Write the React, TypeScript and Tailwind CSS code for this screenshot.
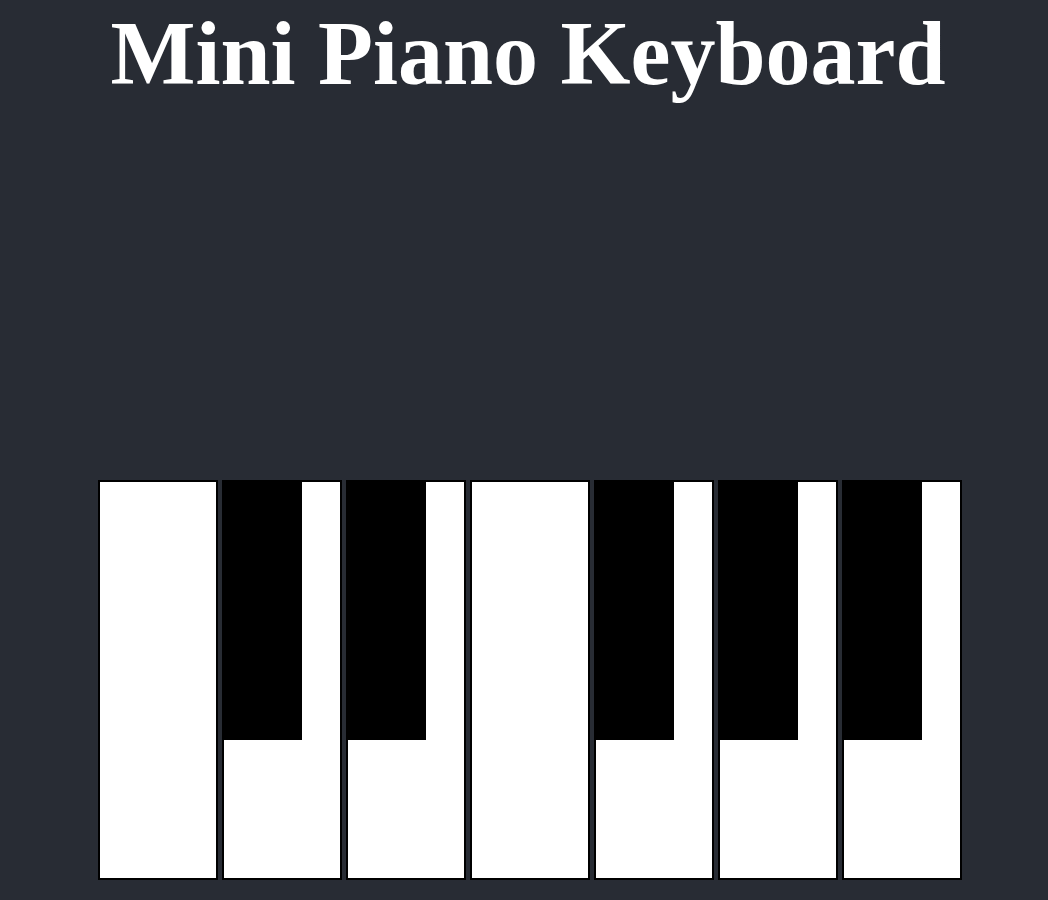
import React from "react";

const keys = [
  { note: "C", sharp: false },
  { note: "D", sharp: true },
  { note: "E", sharp: true },
  { note: "F", sharp: false },
  { note: "G", sharp: true },
  { note: "A", sharp: true },
  { note: "B", sharp: true },
];

const App = () => {
  return (
    <div className="min-h-screen w-full bg-[#282c34] flex flex-col items-center pl-[12px] overflow-hidden">
      <h1 className="pt-[4px] pr-[4px] font-['Liberation_Serif',serif] font-bold text-[90px] leading-[100px] text-white">
        Mini Piano Keyboard
      </h1>

      {/* Keyboard */}
      <div className="mt-[376px] flex gap-[4px]">
        {keys.map((key) => (
          <div
            key={key.note}
            className="relative w-[120px] h-[400px] bg-white border-2 border-black"
          >
            {key.sharp && (
              <div className="absolute -left-[2px] -top-[2px] w-[80px] h-[260px] bg-black" />
            )}
          </div>
        ))}
      </div>
    </div>
  );
};

export default App;
